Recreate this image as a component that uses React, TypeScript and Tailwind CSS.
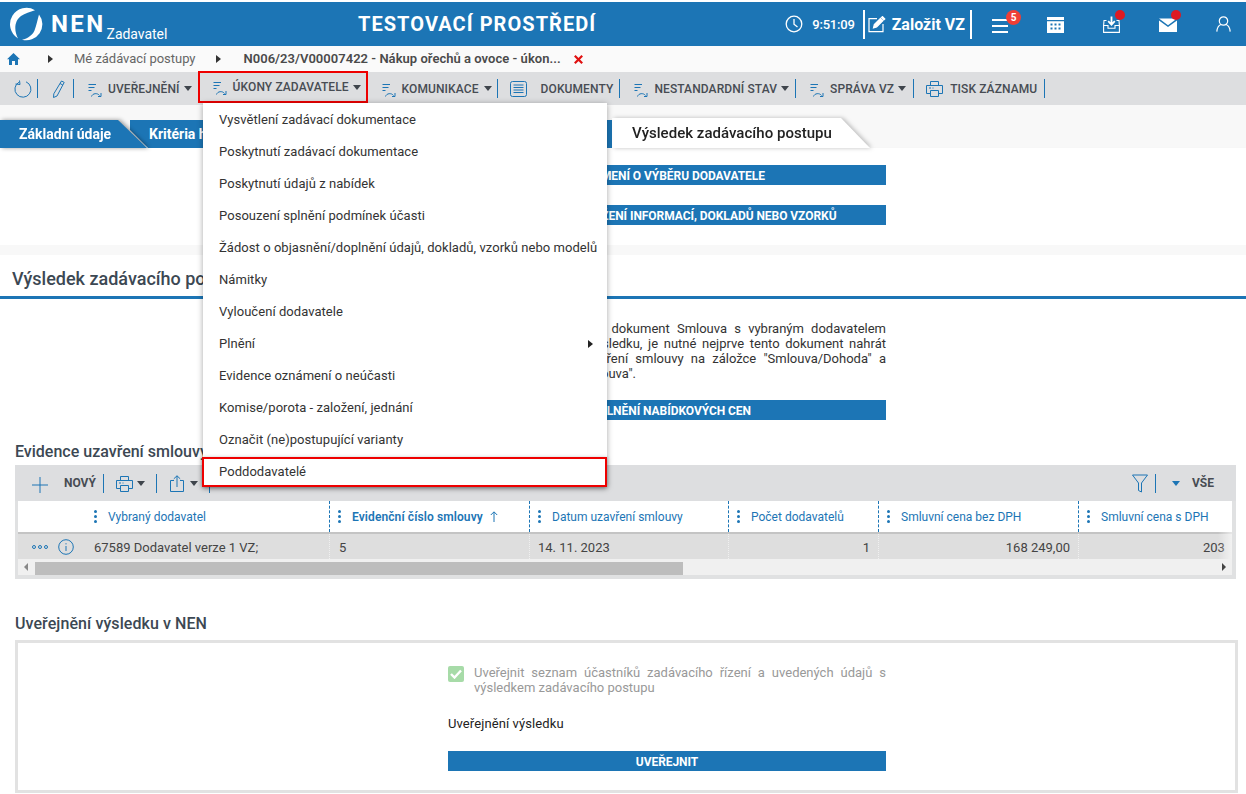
import React from "react";

const B = "#1c75b5";

function ListIcon() {
  return (
    <svg width="15" height="15" viewBox="0 0 15 15" fill="none" stroke={B} strokeWidth="1" className="shrink-0 mt-[3px]">
      <path d="M0.5 1.5H8M0.5 4.5H6.5M0.5 7.5H3.5" />
      <path d="M3.5 13.5C4.5 10.2 9.5 9.6 11.5 12.5" />
      <path d="M13 10V13.5H10" />
    </svg>
  );
}

function Caret({ className = "ml-[5px]" }: { className?: string }) {
  return <span className={`w-0 h-0 border-l-[4px] border-r-[4px] border-t-[5px] border-l-transparent border-r-transparent border-t-[#3f454c] shrink-0 ${className}`} />;
}

function Sep({ className = "" }: { className?: string }) {
  return <span className={`w-px h-[19px] bg-[#1c75b5] shrink-0 ${className}`} />;
}

function Printer() {
  return (
    <svg width="17" height="16" viewBox="0 0 17 16" fill="none" stroke={B} strokeWidth="1" className="shrink-0">
      <path d="M4.5 4V0.5H12.5V4" />
      <path d="M4.5 12.5H0.5V4.5H16.5V12.5H12.5" />
      <path d="M4.5 9.5H12.5V15.5H4.5Z" />
      <path d="M3 7H5M6.5 7H7.5" />
    </svg>
  );
}

function Btn({ children, className = "" }: { children: React.ReactNode; className?: string }) {
  return (
    <div className={`h-5 w-[438px] bg-[#1c75b5] text-white text-[12px] font-bold tracking-[-0.05px] leading-[22px] text-center ${className}`}>
      {children}
    </div>
  );
}

const menu = [
  "Vysvětlení zadávací dokumentace",
  "Poskytnutí zadávací dokumentace",
  "Poskytnutí údajů z nabídek",
  "Posouzení splnění podmínek účasti",
  "Žádost o objasnění/doplnění údajů, dokladů, vzorků nebo modelů",
  "Námitky",
  "Vyloučení dodavatele",
  "Plnění",
  "Evidence oznámení o neúčasti",
  "Komise/porota - založení, jednání",
  "Označit (ne)postupující varianty",
];

function Dots() {
  return (
    <span className="flex flex-col gap-[2px] shrink-0 w-[3px]">
      <span className="w-[3px] h-[3px] rounded-full bg-[#1c75b5]" />
      <span className="w-[3px] h-[3px] rounded-full bg-[#1c75b5]" />
      <span className="w-[3px] h-[3px] rounded-full bg-[#1c75b5]" />
    </span>
  );
}

function Th({ w, pl, children, strong, first }: { w: string; pl: string; children: React.ReactNode; strong?: boolean; first?: boolean }) {
  return (
    <div className={`${w} ${pl} h-full shrink-0 flex items-center gap-[6px] text-[12px] text-[#1c75b5] ${strong ? "font-semibold tracking-[0.1px]" : "font-normal tracking-[0px]"} ${first ? "" : "border-l border-dashed border-[#1c75b5]"}`}>
      {children}
    </div>
  );
}

export default function App() {
  return (
    <div className="relative w-[1246px] h-[794px] overflow-hidden bg-white pt-[2px] [font-family:Roboto,sans-serif] text-[#333]">
      {/* header */}
      <header className="relative h-[44px] bg-[#1c75b5] text-white flex items-center">
        <svg width="34" height="34" viewBox="0 0 34 34" className="ml-[9px] shrink-0" fill="#fff">
          <path d="M26 3.2A16 16 0 0 0 9 31.4C5 24 5 14 12 9C16 6 21 5 26 3.2Z" />
          <path d="M30 7.5A16 16 0 0 1 13 32.7C19 31.5 23.5 28 25.5 23.5C27.5 18.5 28.5 12.5 30 7.5Z" />
        </svg>
        <span className="ml-[8px] text-[24px] font-bold tracking-[2.4px] leading-none">NEN</span>
        <span className="ml-[1px] mt-[19px] text-[14px] tracking-[-0.05px] leading-none">Zadavatel</span>
        <div className="absolute left-[358px] top-[11px] text-[20px] font-bold tracking-[1.05px] leading-[22px]">TESTOVACÍ PROSTŘEDÍ</div>
        <div className="ml-auto flex items-center">
          <svg width="18" height="18" viewBox="0 0 18 18" fill="none" stroke="#fff" strokeWidth="1.3" className="shrink-0">
            <circle cx="9" cy="9" r="7.8" />
            <path d="M9 4V9.3L12.5 12" />
          </svg>
          <span className="ml-[9px] mt-px text-[13px] font-medium tracking-[-0.2px]">9:51:09</span>
          <span className="ml-[8px] w-[2px] h-[29px] bg-white" />
          <svg width="18" height="17" viewBox="0 0 18 17" fill="none" stroke="#fff" strokeWidth="1.2" className="ml-[3px] shrink-0">
            <path d="M9 2.6H1V15.6H15V8" />
            <path d="M5.5 11.8L6.3 8.6L12.5 2.4L14.8 4.7L8.6 11Z" fill="#fff" />
            <path d="M13.5 1.4L14.5 0.6L16.8 2.9L15.8 3.9Z" fill="#fff" />
          </svg>
          <span className="ml-[6px] mt-px text-[16px] font-bold leading-none">Založit VZ</span>
          <span className="ml-[5px] w-[2px] h-[29px] bg-white" />
          <div className="relative ml-[20px] w-[16px] h-[14px] flex flex-col justify-between mt-[4px]">
            <span className="h-[2px] bg-white" />
            <span className="h-[2px] bg-white" />
            <span className="h-[2px] bg-white" />
            <span className="absolute left-[14px] -top-[9px] w-[15px] h-[15px] rounded-full bg-[#ef3e36] text-[10px] font-bold text-center leading-[15px]">5</span>
          </div>
          <svg width="17" height="16" viewBox="0 0 17 16" className="ml-[39px] mt-[1px] shrink-0" fill="#fff">
            <path d="M0 0H17V3H0Z" />
            <path fillRule="evenodd" d="M0 4.2H17V16H0ZM3.5 6.5H5.5V8.5H3.5ZM7.5 6.5H9.5V8.5H7.5ZM11.5 6.5H13.5V8.5H11.5ZM3.5 10.5H5.5V12.5H3.5ZM7.5 10.5H9.5V12.5H7.5ZM11.5 10.5H13.5V12.5H11.5Z" />
          </svg>
          <div className="relative ml-[39px] shrink-0 w-[17px] h-[17px]">
            <svg width="17" height="17" viewBox="0 0 17 17" fill="none" stroke="#fff" strokeWidth="1.1">
              <path d="M3.5 4.5H1L0.6 9.5V16.4H16.4V9.5L16 4.5H13.5" />
              <path d="M0.6 9.5H5V12.2H12V9.5H16.4" />
              <path d="M8.5 0.5V8M5.2 5.2L8.5 8.6L11.8 5.2" strokeWidth="1.8" />
            </svg>
            <span className="absolute left-[12px] -top-[6px] w-[10px] h-[10px] rounded-full bg-[#dd1a22]" />
          </div>
          <div className="relative ml-[39px] shrink-0 w-[18px] h-[14px] mt-[1px]">
            <svg width="18" height="14" viewBox="0 0 18 14" fill="#fff">
              <path d="M0 0.6H18L9 7.2Z" />
              <path d="M0 2.4L9 9L18 2.4V14H0Z" />
            </svg>
            <span className="absolute left-[12px] -top-[8px] w-[10px] h-[10px] rounded-full bg-[#dd1a22]" />
          </div>
          <svg width="15" height="16" viewBox="0 0 15 16" fill="none" stroke="#fff" strokeWidth="1.2" className="ml-[39px] mr-[15px] shrink-0">
            <circle cx="7.5" cy="5" r="4.2" />
            <path d="M0.8 15.6C1.2 11.5 3.4 9 5 8.5M14.2 15.6C13.8 11.5 11.6 9 10 8.5" />
          </svg>
        </div>
      </header>

      {/* breadcrumb */}
      <nav className="h-[26px] bg-[#fafafa] flex items-center text-[13px]">
        <svg width="13" height="12" viewBox="0 0 13 12" fill="#1c75b5" className="ml-[7px] shrink-0">
          <path d="M6.5 0L13 6.2H11V12H8V8H5V12H2V6.2H0Z" />
        </svg>
        <span className="ml-[28px] w-0 h-0 border-y-[4px] border-l-[5px] border-y-transparent border-l-[#333]" />
        <span className="ml-[21px] text-[#666] tracking-[-0.03px]">Mé zádávací postupy</span>
        <span className="ml-[21px] w-0 h-0 border-y-[4px] border-l-[5px] border-y-transparent border-l-[#333]" />
        <span className="ml-[22px] font-semibold text-[#4a4a4a] tracking-[0.03px]">N006/23/V00007422 - Nákup ořechů a ovoce - úkon...</span>
        <svg width="9" height="9" viewBox="0 0 9 9" stroke="#e01010" strokeWidth="2.2" className="ml-[13px] shrink-0">
          <path d="M0.8 0.8L8.2 8.2M8.2 0.8L0.8 8.2" />
        </svg>
      </nav>

      {/* toolbar */}
      <div className="h-[33px] bg-[#dddee0] flex items-center text-[12px] font-medium tracking-[0.1px] text-[#474c53] shadow-[0_1px_1px_rgba(0,0,0,0.06)]">
        <svg width="18" height="18" viewBox="0 0 18 18" fill="none" stroke={B} strokeWidth="1" className="ml-[14px] shrink-0">
          <path d="M12 1.8A8 8 0 1 1 5 2.2" />
          <path d="M5.5 0.5L6 4.5L1.5 4" />
        </svg>
        <Sep className="ml-[5px]" />
        <svg width="13" height="18" viewBox="0 0 13 18" fill="none" stroke={B} strokeWidth="1" className="ml-[14px] shrink-0">
          <path d="M9.5 1L12.2 2.4L5 16L1.5 17.5L1.8 13.8Z" />
          <path d="M8 3.5L10.8 5" />
        </svg>
        <Sep className="ml-[8px]" />
        <span className="ml-[14px] flex items-center"><ListIcon /></span>
        <span className="ml-[5px]">UVEŘEJNĚNÍ</span>
        <Caret className="ml-[4px]" />
        <div className="ml-[6px] h-[32px] w-[170px] self-start -mt-px border-2 border-[#ee0000] flex items-center pl-[13px]">
          <ListIcon />
          <span className="ml-[5px]">ÚKONY ZADAVATELE</span>
          <Caret className="ml-[4px]" />
        </div>
        <span className="ml-[14px] flex items-center"><ListIcon /></span>
        <span className="ml-[5px]">KOMUNIKACE</span>
        <Caret />
        <Sep className="ml-[5px]" />
        <svg width="17" height="16" viewBox="0 0 17 16" fill="none" stroke={B} strokeWidth="1" className="ml-[12px] shrink-0">
          <rect x="0.5" y="0.5" width="16" height="15" rx="2" />
          <path d="M3.5 4H13.5M3.5 6.5H13.5M3.5 9H13.5M3.5 11.5H13.5" />
        </svg>
        <span className="ml-[14px]">DOKUMENTY</span>
        <Sep className="ml-[6px]" />
        <span className="ml-[14px] flex items-center"><ListIcon /></span>
        <span className="ml-[5px]">NESTANDARDNÍ STAV</span>
        <Caret className="ml-[4px]" />
        <Sep className="ml-[6px]" />
        <span className="ml-[14px] flex items-center"><ListIcon /></span>
        <span className="ml-[5px]">SPRÁVA VZ</span>
        <Caret className="ml-[4px]" />
        <Sep className="ml-[7px]" />
        <span className="ml-[12px] flex items-center"><Printer /></span>
        <span className="ml-[7px]">TISK ZÁZNAMU</span>
        <Sep className="ml-[7px]" />
      </div>

      {/* tabs */}
      <div className="h-[43px] bg-[#f8f8f8] flex items-end">
        <div className="relative z-10 shrink-0 drop-shadow-[2px_0_2px_rgba(0,0,0,0.4)]">
          <div className="h-[28px] w-[147px] bg-[#1c75b5] [clip-path:polygon(0_0,118px_0,147px_100%,0_100%)] pl-[19px] text-white text-[14px] font-bold leading-[29px]">
            Základní údaje
          </div>
        </div>
        <div className="h-[28px] w-[483px] -ml-[17px] bg-[#1c75b5] [clip-path:polygon(0_0,100%_0,100%_100%,18px_100%,0_10px)] pl-[19px] text-white text-[14px] font-bold leading-[29px] shrink-0">
          Kritéria hodnocení
        </div>
        <div className="relative z-10 shrink-0 -ml-[1px] drop-shadow-[2px_0_2px_rgba(0,0,0,0.25)]">
          <div className="h-[30px] w-[258px] bg-white [clip-path:polygon(0_0,229px_0,100%_100%,0_100%)] pl-[20px] text-[#222] text-[15px] font-medium tracking-[0.03px] leading-[30px]">
            Výsledek zadávacího postupu
          </div>
        </div>
      </div>

      {/* panel */}
      <section className="h-[97px] bg-white shadow-[0_2px_3px_rgba(0,0,0,0.1)] pl-[448px] pt-[17px]">
        <Btn>OZNÁMENÍ O VÝBĚRU DODAVATELE</Btn>
        <Btn className="mt-[20px]">ŽÁDOST O PŘEDLOŽENÍ INFORMACÍ, DOKLADŮ NEBO VZORKŮ</Btn>
      </section>
      <div className="h-[10px] bg-[#f8f8f8]" />

      {/* section title */}
      <div className="h-[44px] bg-white border-b-[3px] border-[#1c75b5] pl-[12px] pt-[12px] text-[18px] font-medium text-[#3c4853] leading-[24px]">
        Výsledek zadávacího postupu
      </div>

      <div className="ml-[448px] pt-[22px] w-[438px] text-[13px] leading-[15px] text-[#333]">
        <div className="[text-align:justify] [text-align-last:justify]">Pokud má být uveřejněný dokument Smlouva s vybraným dodavatelem</div>
        <div className="[text-align:justify] [text-align-last:justify]">společně se zprávou o výsledku, je nutné nejprve tento dokument nahrát</div>
        <div className="[text-align:justify] [text-align-last:justify]">v sekci pro evidenci uzavření smlouvy na záložce "Smlouva/Dohoda" a</div>
        <div>zvolit typ dokumentu: "Smlouva".</div>
      </div>
      <div className="pl-[448px] mt-[19px]">
        <Btn>DOPLNĚNÍ NABÍDKOVÝCH CEN</Btn>
      </div>

      <h2 className="ml-[15px] mt-[23px] text-[16px] font-medium leading-[18px] text-[#3c4853] whitespace-nowrap">Evidence uzavření smlouvy</h2>

      {/* table */}
      <div className="ml-[15px] mt-[4px] w-[1221px] h-[114px] bg-[#e0e1e2]">
        <div className="h-[36px] bg-[#dddee0] flex items-center text-[12px] font-bold text-[#474c53]">
          <svg width="16" height="16" viewBox="0 0 16 16" stroke={B} strokeWidth="1" className="ml-[17px] mt-[4px] shrink-0">
            <path d="M8 0V16M0 8H16" />
          </svg>
          <span className="ml-[16px]">NOVÝ</span>
          <Sep className="ml-[7px]" />
          <span className="ml-[12px] mt-[2px] flex items-center"><Printer /></span>
          <Caret className="ml-[4px]" />
          <Sep className="ml-[11px]" />
          <svg width="14" height="17" viewBox="0 0 14 17" fill="none" stroke={B} strokeWidth="1" className="ml-[13px] shrink-0">
            <path d="M4 5.5H0.5V16.5H13.5V5.5H10" />
            <path d="M7 12V0.8M3.8 3.8L7 0.8L10.2 3.8" />
          </svg>
          <Caret className="ml-[6px]" />
          <Sep className="ml-[11px]" />
          <svg width="16" height="19" viewBox="0 0 16 19" fill="none" stroke={B} strokeWidth="1" className="ml-auto shrink-0">
            <path d="M0.5 1H15.5L9.5 9V18L6.5 16.5V9Z" />
          </svg>
          <Sep className="ml-[7px]" />
          <span className="ml-[16px] w-0 h-0 border-l-[4px] border-r-[4px] border-t-[5px] border-l-transparent border-r-transparent border-t-[#1c75b5]" />
          <span className="ml-[12px] mr-[22px]">VŠE</span>
        </div>
        <div className="relative ml-[3px] w-[1214px] overflow-hidden">
          <div className="h-[33px] bg-white border-b-2 border-[#c4c4c4] flex items-center">
            <Th w="w-[311px]" pl="pl-[76px]" first><Dots /><span className="ml-[5px]">Vybraný dodavatel</span></Th>
            <Th w="w-[200px]" pl="pl-[8px]" strong>
              <Dots /><span className="ml-[5px]">Evidenční číslo smlouvy</span>
              <svg width="8" height="11" viewBox="0 0 8 11" fill="none" stroke={B} strokeWidth="1" className="ml-[1px] shrink-0">
                <path d="M4 11V1M0.8 4L4 0.8L7.2 4" />
              </svg>
            </Th>
            <Th w="w-[199px]" pl="pl-[8px]"><Dots /><span className="ml-[5px]">Datum uzavření smlouvy</span></Th>
            <Th w="w-[150px]" pl="pl-[8px]"><Dots /><span className="ml-[5px]">Počet dodavatelů</span></Th>
            <Th w="w-[200px]" pl="pl-[8px]"><Dots /><span className="ml-[5px]">Smluvní cena bez DPH</span></Th>
            <Th w="w-[154px]" pl="pl-[8px]"><Dots /><span className="ml-[5px]">Smluvní cena s DPH</span></Th>
          </div>
          <div className="h-[25px] bg-[#dedede] flex items-center text-[13px] text-[#444]">
            <div className="w-[311px] h-full shrink-0 flex items-center">
              <span className="ml-[14px] flex gap-[2px]">
                <span className="w-[4px] h-[4px] rounded-full border border-[#1c75b5]" />
                <span className="w-[4px] h-[4px] rounded-full border border-[#1c75b5]" />
                <span className="w-[4px] h-[4px] rounded-full border border-[#1c75b5]" />
              </span>
              <svg width="16" height="16" viewBox="0 0 16 16" fill="none" stroke={B} strokeWidth="1" className="ml-[10px] shrink-0">
                <circle cx="8" cy="8" r="7.3" />
                <path d="M8 7V12M8 4.2V5.4" />
              </svg>
              <span className="ml-[20px] mt-[2px]">67589 Dodavatel verze 1 VZ;</span>
            </div>
            <div className="w-[200px] h-full shrink-0 pl-[9px] leading-[27px] border-l border-dotted border-[#f0f0f0]">5</div>
            <div className="w-[199px] h-full shrink-0 pl-[8px] leading-[27px] border-l border-dotted border-[#f0f0f0]">14. 11. 2023</div>
            <div className="w-[150px] h-full shrink-0 pr-[8px] text-right leading-[27px] border-l border-dotted border-[#f0f0f0]">1</div>
            <div className="w-[200px] h-full shrink-0 pr-[8px] text-right leading-[27px] border-l border-dotted border-[#f0f0f0]">168 249,00</div>
            <div className="w-[154px] h-full shrink-0 pl-[124px] leading-[27px] whitespace-nowrap border-l border-dotted border-[#f0f0f0]">203</div>
          </div>
          <div className="absolute right-0 top-0 w-[14px] h-[58px] bg-gradient-to-r from-transparent to-white/60" />
          <div className="h-[16px] bg-[#f0f0f0] flex items-center">
            <span className="ml-[6px] w-0 h-0 border-y-[4px] border-r-[4px] border-y-transparent border-r-[#888]" />
            <div className="ml-[7px] w-[648px] h-[13px] bg-[#bdbdbd] self-end" />
            <span className="ml-auto mr-[6px] w-0 h-0 border-y-[4px] border-l-[4px] border-y-transparent border-l-[#444]" />
          </div>
        </div>
      </div>

      <h2 className="ml-[15px] mt-[36px] text-[16px] font-medium tracking-[0.08px] leading-[18px] text-[#3c4853]">Uveřejnění výsledku v NEN</h2>

      {/* box */}
      <div className="ml-[15px] mt-[7px] w-[1223px] h-[153px] border-[3px] border-[#e2e2e2] pl-[430px] pt-[22px]">
        <div className="w-[438px] flex">
          <span className="w-[16px] h-[16px] rounded-[2px] bg-[#a7dba8] flex items-center justify-center shrink-0 mt-[1px]">
            <svg width="12" height="10" viewBox="0 0 12 10" fill="none" stroke="#fff" strokeWidth="2.4">
              <path d="M1 5L4.5 8.5L11 1.5" />
            </svg>
          </span>
          <div className="ml-[10px] w-[412px] text-[13px] leading-[15px] text-[#999]">
            <div className="[text-align:justify] [text-align-last:justify]">Uveřejnit seznam účastníků zadávacího řízení a uvedených údajů s</div>
            <div>výsledkem zadávacího postupu</div>
          </div>
        </div>
        <div className="mt-[21px] text-[13px] tracking-[0.1px] leading-[16px] text-[#222]">Uveřejnění výsledku</div>
        <Btn className="mt-[19px]">UVEŘEJNIT</Btn>
      </div>

      {/* dropdown */}
      <div className="absolute left-[203px] top-[103px] w-[404px] bg-white shadow-[0_1px_6px_rgba(0,0,0,0.35)] text-[13px] tracking-[0.05px] text-[#333] z-20">
        {menu.map((m) => (
          <div key={m} className="h-[32px] pl-[16px] pt-[2px] flex items-center relative">
            {m}
            {m === "Plnění" && (
              <span className="absolute right-[14px] top-[13px] w-0 h-0 border-y-[4px] border-l-[5px] border-y-transparent border-l-[#222]" />
            )}
          </div>
        ))}
        <div className="h-[30px] mt-[2px] -ml-px pl-[15px] flex items-center border-2 border-[#ee0000] shadow-[0_1px_4px_rgba(0,0,0,0.35)]">Poddodavatelé</div>
      </div>
    </div>
  );
}
